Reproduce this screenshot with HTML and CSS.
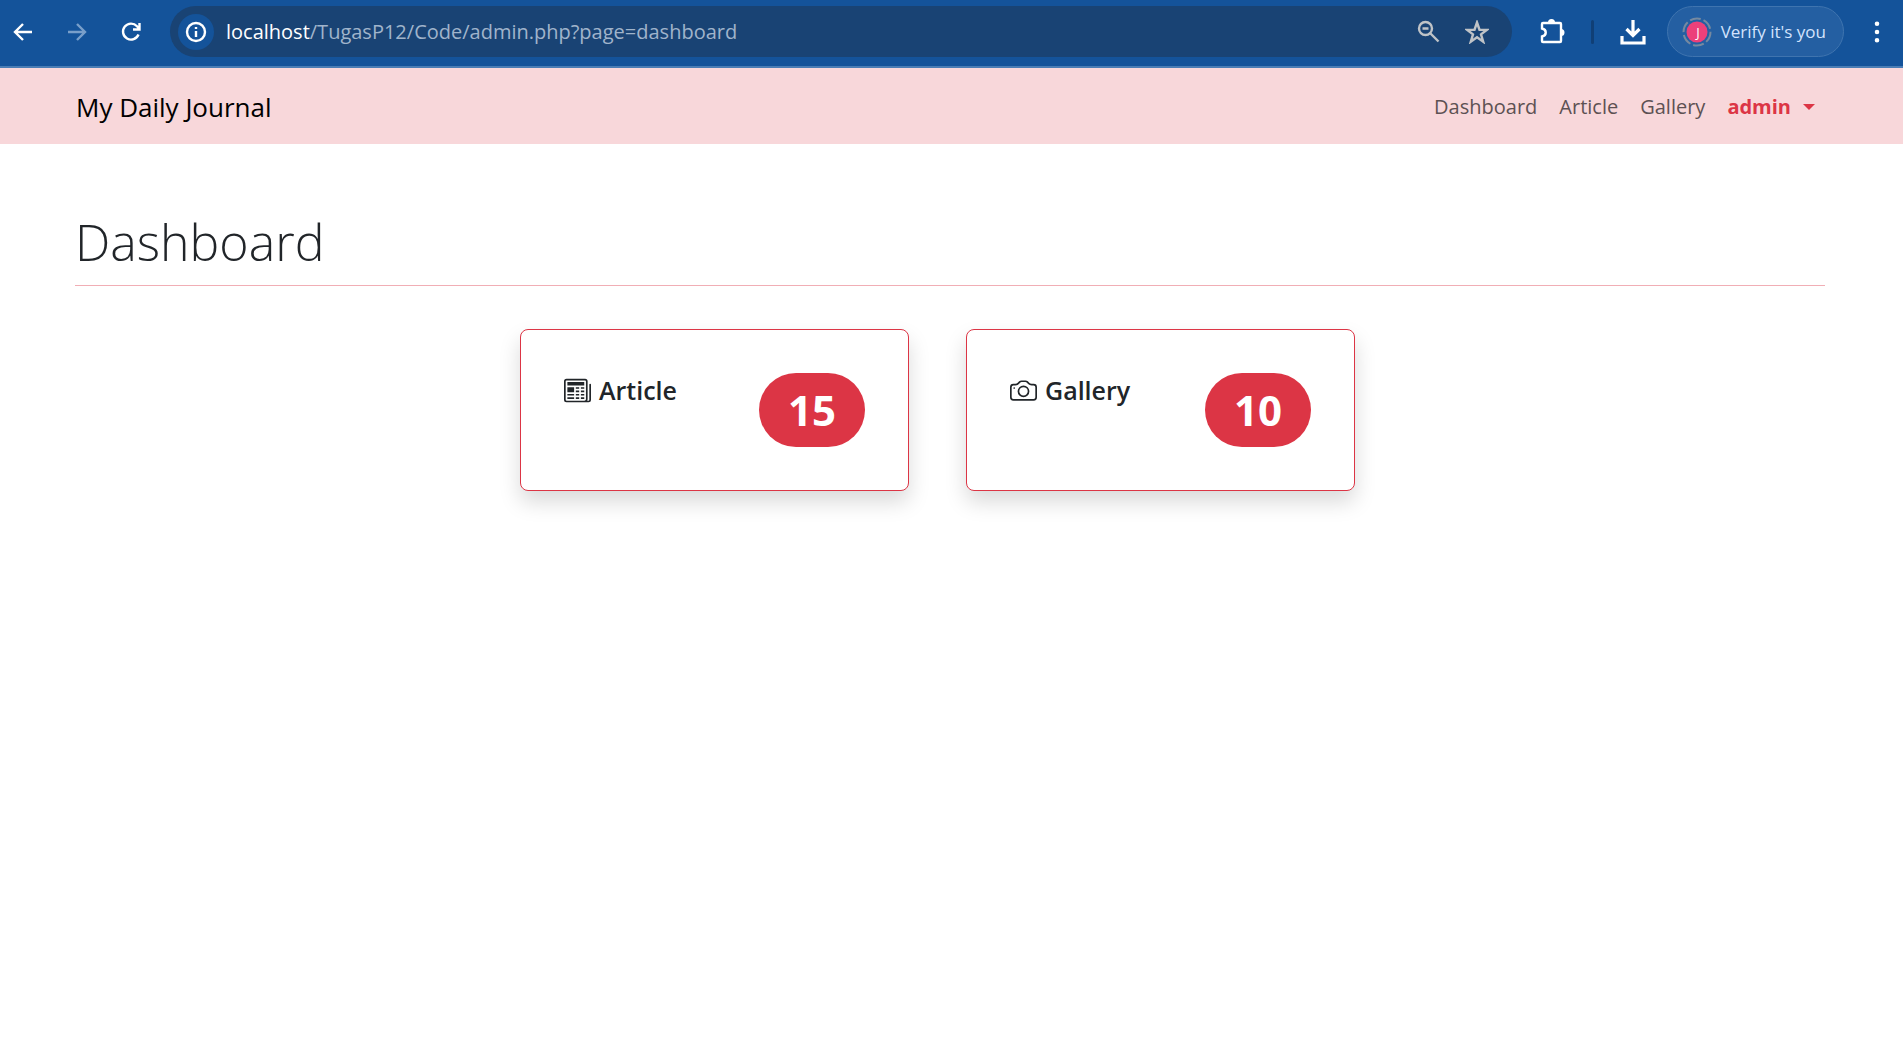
FILE: index.html
```html
<!DOCTYPE html>
<html lang="en">
<head>
<meta charset="utf-8">
<title>My Daily Journal | Admin</title>
<link rel="stylesheet" href="styles.css">
</head>
<body>
<div class="toolbar">
  <div class="history">
    <button class="tool" type="button" aria-label="Back"><svg class="icon" viewBox="0 0 24 24"><path d="M21 12H4M12 4l-8 8 8 8"/></svg></button>
    <button class="tool muted" type="button" aria-label="Forward"><svg class="icon" viewBox="0 0 24 24"><path d="M3 12h17M12 4l8 8-8 8"/></svg></button>
    <button class="tool" type="button" aria-label="Reload"><svg class="icon" viewBox="0 0 24 24"><path d="M19.500 14.500A8 8 0 1 1 18 6.300l2 2.200M20.500 3v6.500H14"/></svg></button>
  </div>
  <form class="address">
    <button class="site-info" type="button" aria-label="Site information"><svg class="icon" viewBox="0 0 24 24"><circle cx="12" cy="12" r="9"/><path d="M12 11v6M12 7v2"/></svg></button>
    <label class="host" for="path">localhost</label>
    <input class="path" id="path" type="text" value="/TugasP12/Code/admin.php?page=dashboard">
    <button class="tool soft" type="button" aria-label="Zoom"><svg class="icon" viewBox="0 0 24 24"><circle cx="8.500" cy="8.500" r="6.500"/><path d="M13.500 13.500l8 8M5.500 8.500h6"/></svg></button>
    <button class="tool soft" type="button" aria-label="Bookmark"><svg class="icon" viewBox="0 0 24 24"><path d="M12 2.500l2.500 7.200 7.500.1-6 4.600 2.200 7.300-6.200-4.400-6.200 4.400L8 14.400 2 9.800l7.500-.1z"/></svg></button>
  </form>
  <div class="actions">
    <button class="tool" type="button" aria-label="Extensions"><svg class="icon wide" viewBox="0 0 28 28"><path d="M5 5h17a1 1 0 0 1 1 1V23a1 1 0 0 1-1 1H5a1 1 0 0 1-1-1v-4.500c5-1 5-7 0-8V6a1 1 0 0 1 1-1z"/><path class="solid" d="M10 4.500a3.500 3.500 0 0 1 7 0zM23 11a3.500 3.500 0 0 1 0 7z"/></svg></button>
    <span class="divider"></span>
    <button class="tool" type="button" aria-label="Downloads"><svg class="icon wide heavy" viewBox="0 0 28 28"><path d="M14 2v15M7.500 11l6.500 6.500 6.500-6.500M3 18v7h22v-7"/></svg></button>
    <button class="profile" type="button">
      <svg class="avatar" viewBox="0 0 30 30" aria-hidden="true"><circle class="ring" cx="15" cy="15" r="13.500"/><circle class="face" cx="15" cy="15" r="10.500"/><text class="initial" x="16" y="20">J</text></svg>
      <span>Verify it's you</span>
    </button>
    <button class="tool menu" type="button" aria-label="Menu"><svg class="icon" viewBox="0 0 24 24"><path class="solid" d="M12 1.500a2.300 2.300 0 1 1 0 4.600 2.300 2.300 0 0 1 0-4.600zm0 8.200a2.300 2.300 0 1 1 0 4.600 2.300 2.300 0 0 1 0-4.600zm0 8.200a2.300 2.300 0 1 1 0 4.600 2.300 2.300 0 0 1 0-4.600z"/></svg></button>
  </div>
</div>

<header class="navbar">
  <a class="brand" href="#">My Daily Journal</a>
  <nav class="links">
    <a href="#">Dashboard</a>
    <a href="#">Article</a>
    <a href="#">Gallery</a>
    <button class="user" type="button">admin</button>
  </nav>
</header>

<main class="content">
  <h1 class="title">Dashboard</h1>
  <div class="cards">
    <section class="card">
      <h2 class="card-title"><svg class="glyph" viewBox="0 0 16 16" aria-hidden="true"><path d="M0 2.500A1.500 1.500 0 0 1 1.500 1h11A1.500 1.500 0 0 1 14 2.500v10.528c0 .3-.05.654-.238.972h.738a.5.5 0 0 0 .5-.5v-9a.5.5 0 0 1 1 0v9a1.500 1.500 0 0 1-1.500 1.500H1.497A1.497 1.497 0 0 1 0 13.500zM12 14c.37 0 .654-.211.853-.441.092-.106.147-.279.147-.531V2.500a.5.5 0 0 0-.5-.5h-11a.5.5 0 0 0-.5.5v11c0 .278.223.5.497.5z"/><path d="M2 3h10v2H2zm0 3h4v3H2zm0 4h4v1H2zm0 2h4v1H2zm5-6h2v1H7zm3 0h2v1h-2zM7 8h2v1H7zm3 0h2v1h-2zm-3 2h2v1H7zm3 0h2v1h-2zm-3 2h2v1H7zm3 0h2v1h-2z"/></svg>Article</h2>
      <span class="badge">15</span>
    </section>
    <section class="card">
      <h2 class="card-title"><svg class="glyph" viewBox="0 0 16 16" aria-hidden="true"><path d="M15 12a1 1 0 0 1-1 1H2a1 1 0 0 1-1-1V6a1 1 0 0 1 1-1h1.172a3 3 0 0 0 2.120-.879l.83-.828A1 1 0 0 1 6.827 3h2.344a1 1 0 0 1 .707.293l.828.828A3 3 0 0 0 12.828 5H14a1 1 0 0 1 1 1zM2 4a2 2 0 0 0-2 2v6a2 2 0 0 0 2 2h12a2 2 0 0 0 2-2V6a2 2 0 0 0-2-2h-1.172a2 2 0 0 1-1.414-.586l-.828-.828A2 2 0 0 0 9.172 2H6.828a2 2 0 0 0-1.414.586l-.828.828A2 2 0 0 1 3.172 4z"/><path d="M8 11a2.500 2.500 0 1 1 0-5 2.500 2.500 0 0 1 0 5m0 1a3.500 3.500 0 1 0 0-7 3.500 3.500 0 0 0 0 7M3 6.500a.5.5 0 1 1-1 0 .5.5 0 0 1 1 0"/></svg>Gallery</h2>
      <span class="badge">10</span>
    </section>
  </div>
</main>
</body>
</html>
```
FILE: styles.css
```css
* { box-sizing: border-box; }

body {
  margin: 0;
  background: #fff;
  color: #212529;
  font-family: "Open Sans", "Noto Sans", sans-serif;
  font-size: 20px;
  line-height: 32px;
}

button, input {
  margin: 0;
  padding: 0;
  border: 0;
  background: none;
  color: inherit;
  font: inherit;
}

a { color: inherit; text-decoration: none; }

/* Browser toolbar */
.toolbar {
  display: flex;
  align-items: center;
  height: 68px;
  padding: 0 14px 3px 11px;
  border-bottom: 2px solid #4a7db5;
  background: #14539a;
  color: #fff;
}

.history { display: flex; gap: 30px; }

.tool { display: flex; flex: none; }
.muted { color: #799fca; }
.soft { color: #bfc3c7; }

.icon {
  width: 24px;
  height: 24px;
  fill: none;
  stroke: currentColor;
  stroke-width: 2.4;
}
.wide { width: 28px; height: 28px; }
.heavy { stroke-width: 3.2; }
.solid { fill: currentColor; stroke: none; }

.address {
  display: flex;
  flex: 1;
  align-items: center;
  height: 51px;
  margin-left: 27px;
  padding: 0 23px 0 8px;
  border-radius: 26px;
  background: #194374;
}

.site-info {
  display: flex;
  align-items: center;
  justify-content: center;
  width: 36px;
  height: 36px;
  margin-right: 12px;
  border-radius: 50%;
  background: #14539a;
}

.path {
  flex: 1;
  min-width: 0;
  color: #a0b4cb;
}

.soft + .soft { margin-left: 24px; }

.actions {
  display: flex;
  align-items: center;
  margin-left: 26px;
}

.divider {
  width: 3px;
  height: 24px;
  margin: 0 25px;
  border-radius: 2px;
  background: #103f76;
}

.profile {
  display: flex;
  align-items: center;
  gap: 9px;
  height: 51px;
  margin-left: 20px;
  padding: 0 17px 0 14px;
  border: 1px solid #3f74af;
  border-radius: 26px;
  background: #245fa2;
  color: #d3e3fd;
  font-size: 17px;
}

.avatar { width: 30px; height: 30px; }
.ring { fill: none; stroke: #7589a0; stroke-width: 2; stroke-dasharray: 11 3; }
.face { fill: #ec407a; }
.initial { fill: #fff; font-size: 13px; text-anchor: middle; }

.menu { margin-left: 21px; }

/* Site navigation */
.navbar {
  display: flex;
  align-items: center;
  justify-content: space-between;
  height: 76px;
  padding: 1px 88px 0 76px;
  background: #f8d7da;
}

.brand { color: #000; font-size: 26px; }

.links {
  display: flex;
  align-items: center;
  gap: 22px;
  color: #5d5153;
}

.user {
  display: flex;
  align-items: center;
  gap: 12px;
  color: #dc3545;
  font-weight: 700;
}
.user::after {
  content: "";
  border: 6px solid transparent;
  border-top-color: currentColor;
  border-bottom: 0;
}

/* Dashboard */
.content { padding: 64px 78px 80px 75px; }

.title {
  margin: 0 0 43px;
  padding-bottom: 9px;
  border-bottom: 1px solid #f1aeb5;
  font-size: 50px;
  font-weight: 300;
  line-height: 68px;
}

.cards {
  display: flex;
  justify-content: center;
  gap: 57px;
  padding-right: 25px;
}

.card {
  display: flex;
  align-items: flex-start;
  justify-content: space-between;
  width: 389px;
  padding: 43px;
  border: 1px solid #dc3545;
  border-radius: 8px;
  background: #fff;
  box-shadow: 0 11px 21px rgba(0, 0, 0, 0.15);
}

.card-title {
  display: flex;
  align-items: center;
  gap: 8px;
  margin: 0;
  font-size: 25px;
  font-weight: 600;
  line-height: 34px;
}

.glyph { width: 27px; height: 27px; fill: currentColor; }

.badge {
  width: 106px;
  border-radius: 37px;
  background: #dc3545;
  color: #fff;
  font-size: 42px;
  font-weight: 700;
  line-height: 74px;
  text-align: center;
}
```
